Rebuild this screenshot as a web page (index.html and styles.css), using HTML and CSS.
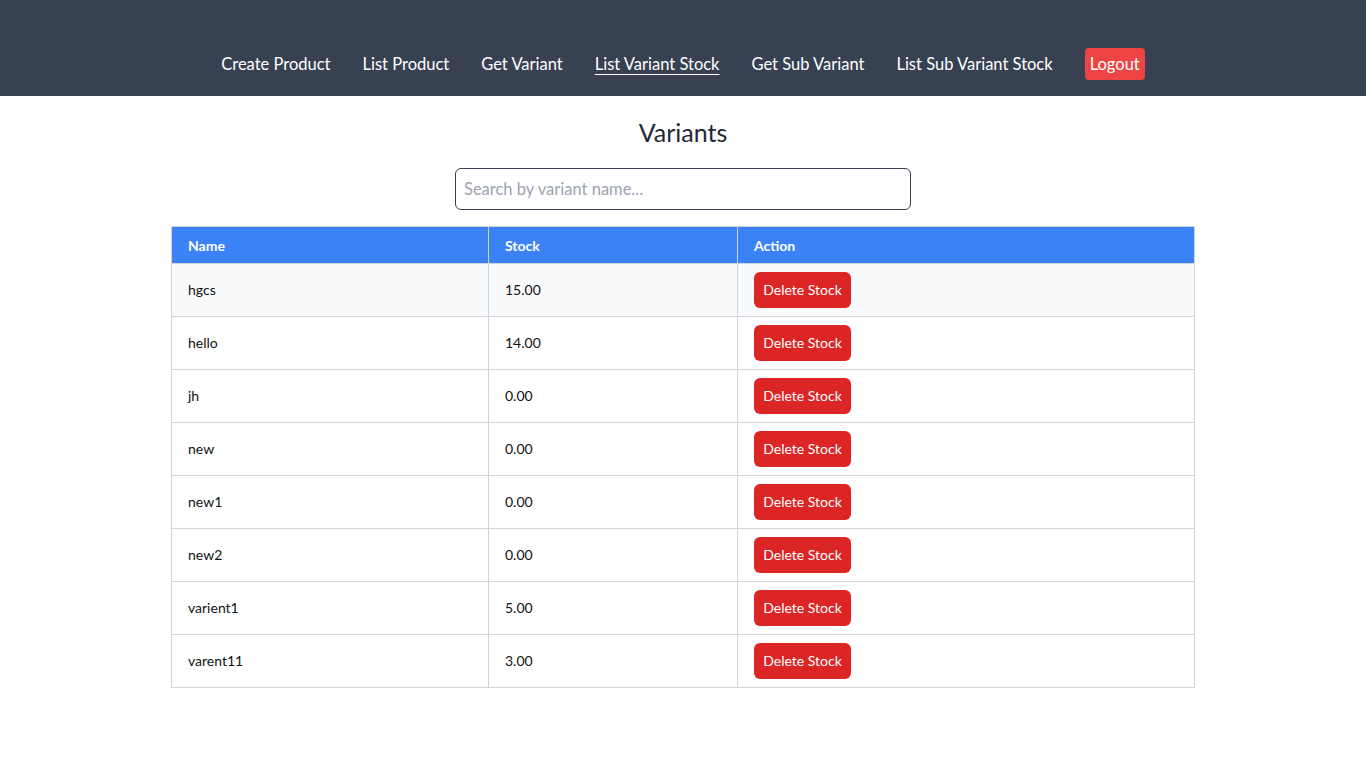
FILE: index.html
```html
<!DOCTYPE html>
<html lang="en">
<head>
<meta charset="utf-8">
<title>Variants</title>
<link rel="stylesheet" href="styles.css">
</head>
<body>
<nav class="navbar">
  <a class="nav-link" href="#">Create Product</a>
  <a class="nav-link" href="#">List Product</a>
  <a class="nav-link" href="#">Get Variant</a>
  <a class="nav-link active" href="#">List Variant Stock</a>
  <a class="nav-link" href="#">Get Sub Variant</a>
  <a class="nav-link" href="#">List Sub Variant Stock</a>
  <button class="logout">Logout</button>
</nav>
<main class="content">
  <h2 class="title">Variants</h2>
  <input class="search" type="text" placeholder="Search by variant name...">
  <table class="stock-table">
    <thead>
      <tr><th class="col-name">Name</th><th class="col-stock">Stock</th><th class="col-action">Action</th></tr>
    </thead>
    <tbody>
      <tr><td>hgcs</td><td>15.00</td><td><button class="delete">Delete Stock</button></td></tr>
      <tr><td>hello</td><td>14.00</td><td><button class="delete">Delete Stock</button></td></tr>
      <tr><td>jh</td><td>0.00</td><td><button class="delete">Delete Stock</button></td></tr>
      <tr><td>new</td><td>0.00</td><td><button class="delete">Delete Stock</button></td></tr>
      <tr><td>new1</td><td>0.00</td><td><button class="delete">Delete Stock</button></td></tr>
      <tr><td>new2</td><td>0.00</td><td><button class="delete">Delete Stock</button></td></tr>
      <tr><td>varient1</td><td>5.00</td><td><button class="delete">Delete Stock</button></td></tr>
      <tr><td>varent11</td><td>3.00</td><td><button class="delete">Delete Stock</button></td></tr>
    </tbody>
  </table>
</main>
</body>
</html>
```
FILE: styles.css
```css
* { box-sizing: border-box; }
body {
  margin: 0;
  font-family: "Lato", "Noto Sans", sans-serif;
  color: #111827;
  background: #fff;
}
.navbar {
  background: #374151;
  height: 96px;
  padding: 48px 0 16px;
  display: flex;
  justify-content: center;
  align-items: center;
  gap: 32px;
}
.nav-link {
  color: #fff;
  text-decoration: none;
  font-size: 16.5px;
  line-height: 24px;
}
.nav-link.active { text-decoration: underline; text-underline-offset: 4px; }
.logout {
  background: #ef4444;
  color: #fff;
  border: 0;
  border-radius: 4px;
  font: inherit;
  font-size: 16.5px;
  line-height: 24px;
  padding: 4px 5px;
}
.content {
  display: flex;
  flex-direction: column;
  align-items: center;
  padding-top: 20px;
}
.title {
  margin: 0 0 20px;
  font-size: 25px;
  line-height: 32px;
  font-weight: 400;
  color: #1f2937;
}
.search {
  width: 456px;
  height: 42px;
  border: 1px solid #374151;
  border-radius: 6px;
  padding: 8px;
  font: inherit;
  font-size: 16.5px;
  line-height: 24px;
  margin-bottom: 16px;
}
.search::placeholder { color: #9ca3af; }
.stock-table {
  width: 1024px;
  border-collapse: collapse;
  font-size: 14px;
}
.stock-table th, .stock-table td {
  border: 1px solid #d1d5db;
  text-align: left;
  padding: 8px 16px;
  line-height: 20px;
}
.stock-table th {
  background: #3b82f6;
  color: #fff;
  font-weight: 700;
  padding-top: 9px;
  padding-bottom: 7px;
}
.col-name { width: 317px; }
.col-stock { width: 249px; }
.stock-table tbody tr:nth-child(odd) { background: #f9fafb; }
.stock-table tbody tr:nth-child(n+2) { background: #fff; }
.stock-table td { color: #111; height: 53px; }
.delete {
  background: #dc2626;
  color: #fff;
  border: 0;
  border-radius: 6px;
  font: inherit;
  font-size: 14px;
  line-height: 20px;
  padding: 8px 8px;
  height: 36px;
  width: 97px;
  vertical-align: middle;
}
```
